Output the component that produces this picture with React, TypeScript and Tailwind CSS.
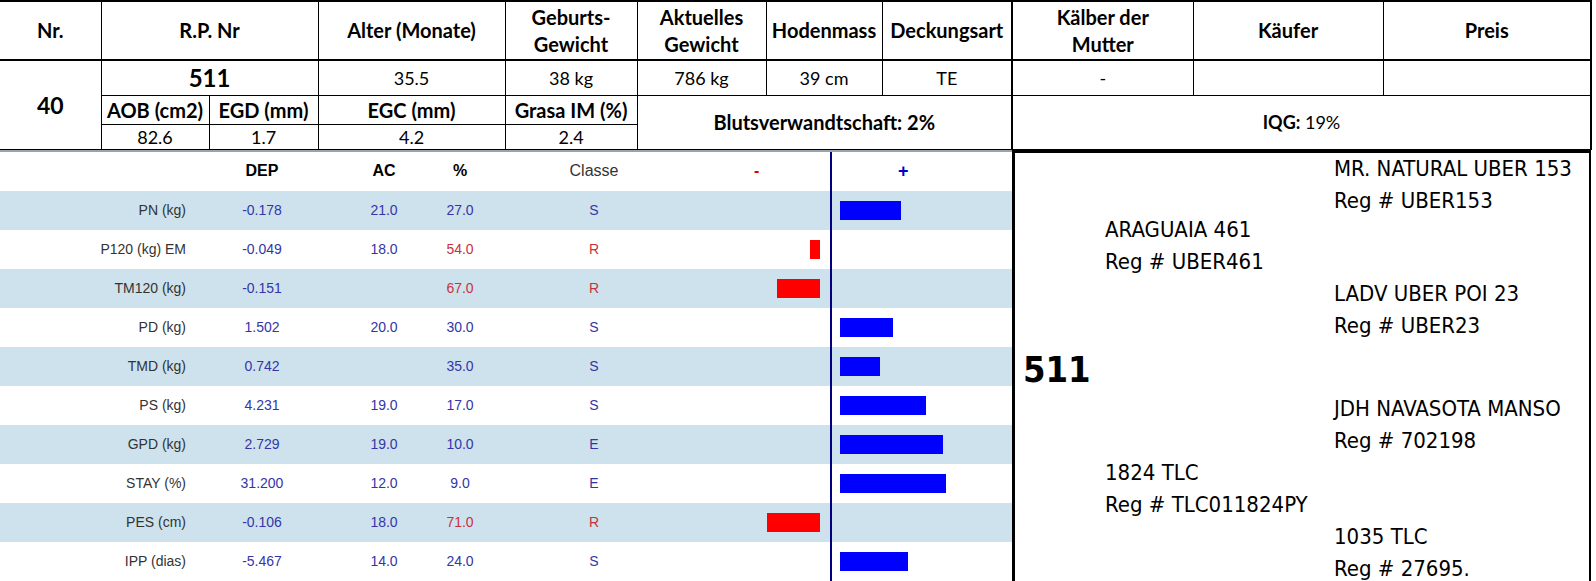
import React from "react";

type Trait = {
  label: string;
  dep: string;
  ac: string;
  pct: string;
  cls: string;
  bar: number;
};

const traits: Trait[] = [
  { label: "PN (kg)", dep: "-0.178", ac: "21.0", pct: "27.0", cls: "S", bar: 61 },
  { label: "P120 (kg) EM", dep: "-0.049", ac: "18.0", pct: "54.0", cls: "R", bar: -10 },
  { label: "TM120 (kg)", dep: "-0.151", ac: "", pct: "67.0", cls: "R", bar: -43 },
  { label: "PD (kg)", dep: "1.502", ac: "20.0", pct: "30.0", cls: "S", bar: 53 },
  { label: "TMD (kg)", dep: "0.742", ac: "", pct: "35.0", cls: "S", bar: 40 },
  { label: "PS (kg)", dep: "4.231", ac: "19.0", pct: "17.0", cls: "S", bar: 86 },
  { label: "GPD (kg)", dep: "2.729", ac: "19.0", pct: "10.0", cls: "E", bar: 103 },
  { label: "STAY (%)", dep: "31.200", ac: "12.0", pct: "9.0", cls: "E", bar: 106 },
  { label: "PES (cm)", dep: "-0.106", ac: "18.0", pct: "71.0", cls: "R", bar: -53 },
  { label: "IPP (dias)", dep: "-5.467", ac: "14.0", pct: "24.0", cls: "S", bar: 68 },
];

const cell = "border border-black p-0 text-center align-middle";
const head = `${cell} text-[20px] font-bold leading-[27px]`;
const val = `${cell} text-[18px] leading-[24px]`;
const sub = `${cell} text-[20px] font-bold leading-[24px]`;

function TopTable() {
  return (
    <table className="w-[1591px] table-fixed border-collapse border-t-2 border-black font-['Lato',sans-serif] text-black">
      <colgroup>
        <col className="w-[101px]" />
        <col className="w-[108px]" />
        <col className="w-[109px]" />
        <col className="w-[187px]" />
        <col className="w-[132px]" />
        <col className="w-[129px]" />
        <col className="w-[116px]" />
        <col className="w-[130px]" />
        <col className="w-[181px]" />
        <col className="w-[190px]" />
        <col className="w-[208px]" />
      </colgroup>
      <tbody>
        <tr className="h-[59px] border-b-2 border-black">
          <td className={`${head} border-l-0`}>Nr.</td>
          <td className={head} colSpan={2}>
            R.P. Nr
          </td>
          <td className={head}>Alter (Monate)</td>
          <td className={head}>
            Geburts-
            <br />
            Gewicht
          </td>
          <td className={head}>
            Aktuelles
            <br />
            Gewicht
          </td>
          <td className={head}>Hodenmass</td>
          <td className={head}>Deckungsart</td>
          <td className={`${head} border-l-2`}>
            Kälber der
            <br />
            Mutter
          </td>
          <td className={head}>Käufer</td>
          <td className={`${head} border-r-2`}>Preis</td>
        </tr>
        <tr className="h-[35px]">
          <td className={`${cell} border-l-0 text-[23px] font-bold leading-[28px]`} rowSpan={3}>
            40
          </td>
          <td className={`${cell} text-[24px] font-bold leading-[28px]`} colSpan={2}>
            511
          </td>
          <td className={val}>35.5</td>
          <td className={val}>38 kg</td>
          <td className={val}>786 kg</td>
          <td className={val}>39 cm</td>
          <td className={val}>TE</td>
          <td className={`${val} border-l-2`}>-</td>
          <td className={val}></td>
          <td className={`${val} border-r-2`}></td>
        </tr>
        <tr className="h-[29px]">
          <td className={sub}>AOB (cm2)</td>
          <td className={sub}>EGD (mm)</td>
          <td className={sub}>EGC (mm)</td>
          <td className={sub}>Grasa IM (%)</td>
          <td className={sub} colSpan={3} rowSpan={2}>
            Blutsverwandtschaft: 2%
          </td>
          <td className={`${val} border-l-2 border-r-2`} colSpan={3} rowSpan={2}>
            <span className="font-bold">IQG:</span> 19%
          </td>
        </tr>
        <tr className="h-[25px]">
          <td className={`${val} leading-[21px]`}>82.6</td>
          <td className={`${val} leading-[21px]`}>1.7</td>
          <td className={`${val} leading-[21px]`}>4.2</td>
          <td className={`${val} leading-[21px]`}>2.4</td>
        </tr>
      </tbody>
    </table>
  );
}

const rowGrid = "grid h-[39px] grid-cols-[201px_122px_122px_30px_238px_117px_1fr] items-stretch";

function Chart() {
  return (
    <div className="flex w-[1012px] flex-col border-t-2 border-[#9aa3a8] font-['Liberation_Sans',Arial,sans-serif] text-[14px] leading-[18px]">
      <div className={`${rowGrid} h-[38px] text-[16px]`}>
        <div />
        <div className="flex items-center justify-center font-bold text-black">DEP</div>
        <div className="flex items-center justify-center font-bold text-black">AC</div>
        <div className="flex items-center justify-center font-bold text-black">%</div>
        <div className="flex items-center justify-center text-[#333]">Classe</div>
        <div className="flex items-center pl-[41px] font-bold text-[#e00000]">-</div>
        <div className="flex items-center border-l-2 border-[#000080] pl-[66px] text-[18px] font-bold text-[#0000cc]">
          +
        </div>
      </div>
      {traits.map((t, i) => {
        const red = t.cls === "R";
        return (
          <div key={t.label} className={`${rowGrid} ${i % 2 === 0 ? "bg-[#cde2ed]" : "bg-white"}`}>
            <div className="flex items-center justify-end pr-[15px] text-[#333]">{t.label}</div>
            <div className="flex items-center justify-center text-[#3535a8]">{t.dep}</div>
            <div className="flex items-center justify-center text-[#3535a8]">{t.ac}</div>
            <div className={`flex items-center justify-center ${red ? "text-[#c8323c]" : "text-[#3535a8]"}`}>
              {t.pct}
            </div>
            <div className={`flex items-center justify-center ${red ? "text-[#c8323c]" : "text-[#3535a8]"}`}>
              {t.cls}
            </div>
            <div className="flex items-center justify-end pr-[10px]">
              {t.bar < 0 && <div className="h-[19px] bg-[#ff0000]" style={{ width: -t.bar }} />}
            </div>
            <div className="flex items-center border-l-2 border-[#000080] pl-[8px]">
              {t.bar > 0 && <div className="h-[19px] bg-[#0000ff]" style={{ width: t.bar }} />}
            </div>
          </div>
        );
      })}
      <div className="grid flex-1 grid-cols-[201px_122px_122px_30px_238px_117px_1fr]">
        <div className="col-start-7 border-l-2 border-[#000080]" />
      </div>
    </div>
  );
}

function Animal({ name, reg }: { name: string; reg: string }) {
  return (
    <div className="leading-[32px] whitespace-nowrap">
      <div>{name}</div>
      <div>{reg}</div>
    </div>
  );
}

function Pedigree() {
  return (
    <div className="grid flex-1 grid-cols-[90px_229px_1fr] overflow-hidden border-t-[3px] border-r-2 border-l-[3px] border-black font-['DejaVu_Sans_Condensed','DejaVu_Sans',sans-serif] text-[22px] text-black font-stretch-condensed">
      <div className="pl-[8px]">
        <div className="mt-[195px] text-[36px] leading-[44px] font-bold">511</div>
      </div>
      <div className="flex flex-col">
        <div className="mt-[61px]">
          <Animal name="ARAGUAIA 461" reg="Reg # UBER461" />
        </div>
        <div className="mt-[179px]">
          <Animal name="1824 TLC" reg="Reg # TLC011824PY" />
        </div>
      </div>
      <div className="flex flex-col">
        <Animal name="MR. NATURAL UBER 153" reg="Reg # UBER153" />
        <div className="mt-[61px]">
          <Animal name="LADV UBER POI 23" reg="Reg # UBER23" />
        </div>
        <div className="mt-[51px]">
          <Animal name="JDH NAVASOTA MANSO" reg="Reg # 702198" />
        </div>
        <div className="mt-[64px]">
          <Animal name="1035 TLC" reg="Reg # 27695." />
        </div>
      </div>
    </div>
  );
}

export default function App() {
  return (
    <div className="h-[581px] w-[1596px] overflow-hidden bg-white">
      <TopTable />
      <div className="flex h-[432px] w-[1591px]">
        <Chart />
        <Pedigree />
      </div>
    </div>
  );
}
